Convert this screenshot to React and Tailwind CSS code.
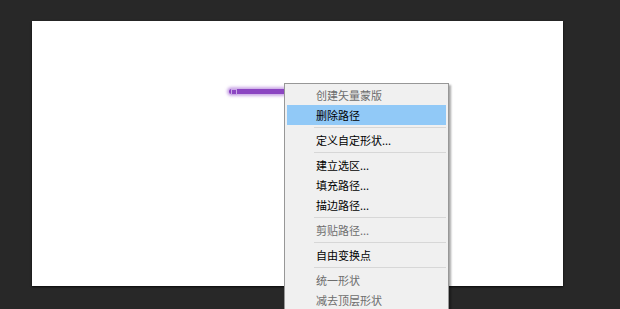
import React from "react";

const items = [
    { label: "创建矢量蒙版", disabled: true },
    { label: "删除路径", active: true },
    { sep: true },
    { label: "定义自定形状..." },
    { sep: true },
    { label: "建立选区..." },
    { label: "填充路径..." },
    { label: "描边路径..." },
    { sep: true },
    { label: "剪贴路径...", disabled: true },
    { sep: true },
    { label: "自由变换点" },
    { sep: true },
    { label: "统一形状", disabled: true },
    { label: "减去顶层形状", disabled: true },
];

const ContextMenu = () => (
    <div className="absolute left-[284px] top-[83px] w-[165px] border border-[#979797] bg-[#f0f0f0] px-[2px] pt-[1px] shadow-[2px_2px_2px_rgba(0,0,0,0.35)]">
        {items.map((item, i) =>
            item.sep ? (
                <div key={i} className="flex h-[5px] items-center pl-[27px]">
                    <div className="h-px w-full bg-[#d7d7d7]" />
                </div>
            ) : (
                <div
                    key={i}
                    className={`flex h-[20px] items-center pl-[29px] text-[11px] leading-none ${
                        item.active ? "bg-[#91c9f7]" : ""
                    } ${item.disabled ? "text-[#6d6d6d]" : "text-black"}`}
                >
                    {item.label}
                </div>
            )
        )}
    </div>
);

const App = () => {
    return (
        <div
            className="relative h-[309px] w-[620px] overflow-hidden bg-[#282828]"
            style={{ fontFamily: '"Noto Sans CJK SC", "Noto Sans", sans-serif' }}
        >
            <div className="pl-[32px] pt-[21px]">
                <div className="relative h-[265px] w-[531px] bg-white shadow-[0_1px_2px_rgba(0,0,0,0.8)]">
                    {/* path stroke */}
                    <div className="absolute left-[197px] top-[68px] h-[5px] w-[70px] rounded-full bg-[#8c45c2] shadow-[0_0_3px_2px_rgba(160,100,210,0.55)]" />
                    <div className="absolute left-[199px] top-[68px] h-[6px] w-[6px] border border-[#c9a8e6]" />
                </div>
            </div>
            <ContextMenu />
        </div>
    );
};

export default App;
